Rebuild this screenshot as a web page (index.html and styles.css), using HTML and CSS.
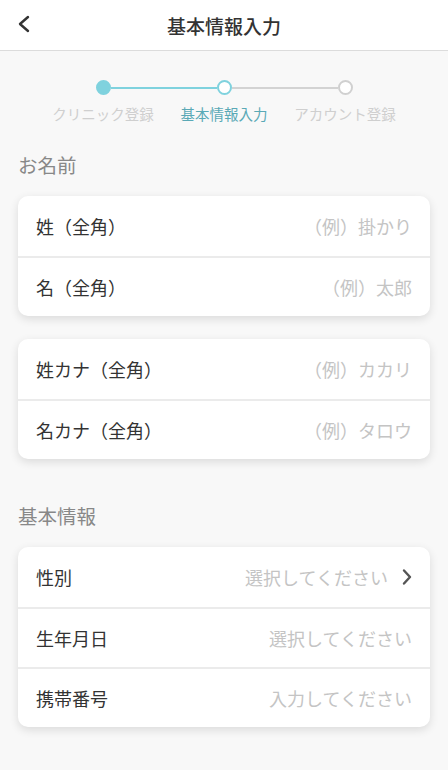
FILE: index.html
```html
<!DOCTYPE html>
<html lang="ja">
<head>
  <meta charset="UTF-8">
  <meta name="viewport" content="width=device-width, initial-scale=1.0">
  <title>基本情報入力</title>
  <link rel="stylesheet" href="styles.css">
</head>
<body>
  <header class="top-bar">
    <button class="back-button" aria-label="戻る">
      <svg width="14" height="18" viewBox="0 0 14 18">
        <path d="M11 2 L3 9 L11 16" fill="none" stroke="#333" stroke-width="2.4" stroke-linecap="round" stroke-linejoin="round"/>
      </svg>
    </button>
    <h1 class="page-title">基本情報入力</h1>
  </header>

  <main class="content">
    <div class="stepper">
      <div class="steps">
        <span class="step-dot done"></span>
        <span class="step-line done"></span>
        <span class="step-dot current"></span>
        <span class="step-line"></span>
        <span class="step-dot"></span>
      </div>
      <div class="step-labels">
        <span class="step-label">クリニック登録</span>
        <span class="step-label current">基本情報入力</span>
        <span class="step-label">アカウント登録</span>
      </div>
    </div>

    <h2 class="section-title">お名前</h2>
    <div class="card">
      <div class="row">
        <span class="row-label">姓（全角）</span>
        <span class="row-value">（例）掛かり</span>
      </div>
      <div class="row">
        <span class="row-label">名（全角）</span>
        <span class="row-value">（例）太郎</span>
      </div>
    </div>

    <div class="card">
      <div class="row">
        <span class="row-label">姓カナ（全角）</span>
        <span class="row-value">（例）カカリ</span>
      </div>
      <div class="row">
        <span class="row-label">名カナ（全角）</span>
        <span class="row-value">（例）タロウ</span>
      </div>
    </div>

    <h2 class="section-title spaced">基本情報</h2>
    <div class="card">
      <div class="row">
        <span class="row-label">性別</span>
        <span class="row-value">選択してください
          <svg class="chevron" width="12" height="18" viewBox="0 0 12 18">
            <path d="M3 2.5 L9 9 L3 15.5" fill="none" stroke="#555" stroke-width="2.4" stroke-linecap="round" stroke-linejoin="round"/>
          </svg>
        </span>
      </div>
      <div class="row">
        <span class="row-label">生年月日</span>
        <span class="row-value">選択してください</span>
      </div>
      <div class="row">
        <span class="row-label">携帯番号</span>
        <span class="row-value">入力してください</span>
      </div>
    </div>
  </main>
</body>
</html>
```

FILE: styles.css
```css
body {
  margin: 0;
  font-family: "Noto Sans CJK JP", "Noto Sans", sans-serif;
  background: #f8f8f8;
  color: #333;
}

.top-bar {
  height: 50px;
  background: #fff;
  border-bottom: 1px solid #dcdcdc;
  display: flex;
  align-items: center;
  justify-content: center;
  position: relative;
}

.back-button {
  position: absolute;
  left: 17px;
  top: 15px;
  padding: 0;
  border: none;
  background: none;
  display: flex;
}

.page-title {
  margin: 0;
  font-size: 19px;
  font-weight: 500;
  color: #333;
}

.content {
  padding: 0 18px 40px;
}

.stepper {
  padding-top: 29px;
}

.steps {
  display: flex;
  align-items: center;
  justify-content: center;
}

.step-dot {
  width: 15px;
  height: 15px;
  box-sizing: border-box;
  border-radius: 50%;
  border: 2px solid #d0d0d0;
  background: #fff;
}

.step-dot.done {
  background: #7fd2de;
  border-color: #7fd2de;
}

.step-dot.current {
  border-color: #7fd2de;
}

.step-line {
  width: 106px;
  height: 2px;
  background: #d3d3d3;
}

.step-line.done {
  background: #7fd2de;
}

.step-labels {
  display: grid;
  grid-template-columns: repeat(3, 121px);
  justify-content: center;
  margin-top: 8px;
}

.step-label {
  text-align: center;
  font-size: 14.5px;
  color: #cfcfcf;
  white-space: nowrap;
}

.step-label.current {
  color: #5aa9b6;
}

.section-title {
  margin: 26px 0 17px;
  font-size: 19.5px;
  font-weight: 400;
  color: #888;
}

.section-title.spaced {
  margin-top: 42px;
}

.card {
  background: #fff;
  border-radius: 10px;
  box-shadow: 0 3px 10px rgba(0, 0, 0, 0.12);
  margin-bottom: 23px;
  overflow: hidden;
}

.row {
  height: 60px;
  padding: 0 18px;
  display: flex;
  align-items: center;
  justify-content: space-between;
  border-top: 2px solid #ebebeb;
  box-sizing: border-box;
}

.row:first-child {
  border-top: none;
}

.row-label {
  font-size: 18px;
  color: #333;
}

.row-value {
  font-size: 18px;
  color: #c4c4c4;
  display: flex;
  align-items: center;
  gap: 13px;
}

.chevron {
  margin-right: -1px;
}
```
